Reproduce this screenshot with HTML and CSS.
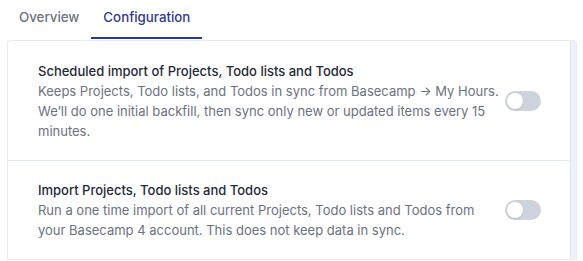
FILE: index.html
```html
<!DOCTYPE html>
<html>
<head>
<meta charset="utf-8">
<link rel="stylesheet" href="styles.css">
</head>
<body>
<div class="page">
  <nav class="tabs">
    <div class="tab">Overview</div>
    <div class="tab active">Configuration</div>
  </nav>
  <div class="card">
    <div class="rows">
      <div class="row">
        <div class="text">
          <div class="title">Scheduled import of Projects, Todo lists and Todos</div>
          <div class="desc">Keeps Projects, Todo lists, and Todos in sync from Basecamp → My Hours. We’ll do one initial backfill, then sync only new or updated items every 15 minutes.</div>
        </div>
        <div class="toggle"><span class="knob"></span></div>
      </div>
      <div class="row">
        <div class="text">
          <div class="title">Import Projects, Todo lists and Todos</div>
          <div class="desc">Run a one time import of all current Projects, Todo lists and Todos from your Basecamp 4 account. This does not keep data in sync.</div>
        </div>
        <div class="toggle"><span class="knob"></span></div>
      </div>
    </div>
    <div class="scrolltrack"></div>
  </div>
</div>
</body>
</html>
```
FILE: styles.css
```css
* { box-sizing: border-box; }
html, body { margin: 0; padding: 0; background: #fff; }
body { font-family: Inter, "Noto Sans", sans-serif; }
.page { padding: 0 7px; }
.tabs { display: flex; height: 40px; }
.tab {
  padding: 0 12px;
  height: 39px;
  line-height: 34px;
  font-size: 13.3px;
  font-weight: 500;
  color: #6b7280;
}
.tab.active {
  color: #2e3a94;
  border-bottom: 2px solid #2e3a94;
}
.card {
  display: flex;
  border: 1px solid #e3ebf5;
  border-bottom: none;
  border-radius: 4px 4px 0 0;
  width: 570px;
}
.rows { flex: 1; }
.row {
  display: flex;
  align-items: center;
  padding: 20px 29px 19px 30px;
  border-bottom: 1px solid #e3ebf5;
}
.row + .row { padding-top: 19px; }
.text { flex: 1; padding-right: 0; }
.title {
  font-size: 13px;
  line-height: 20px;
  font-weight: 500;
  color: #1f2937;
}
.desc {
  font-size: 13px;
  line-height: 20px;
  color: #6b7280;
}
.toggle {
  flex: none;
  width: 36px;
  height: 20px;
  border-radius: 10px;
  background: #cdd3dc;
  padding: 2px;
}
.knob {
  display: block;
  width: 16px;
  height: 16px;
  border-radius: 50%;
  background: #fff;
  box-shadow: 0 1px 2px rgba(0,0,0,0.1);
}
.scrolltrack {
  width: 6px;
  background: #edf2fa;
  border-left: 1px solid #dfe7f3;
}
```
